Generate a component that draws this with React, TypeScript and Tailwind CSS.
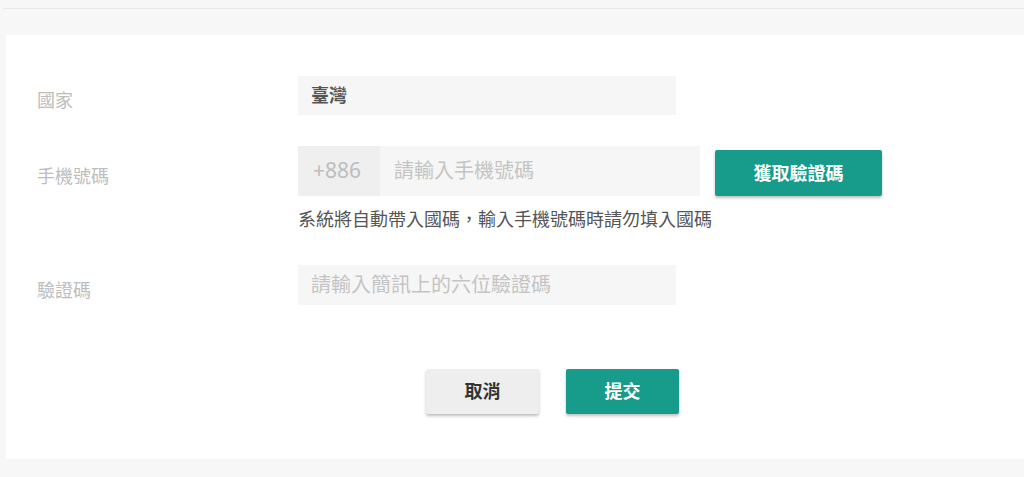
export default function App() {
  return (
    <div
      className="min-h-[477px] bg-[#f7f7f7] pt-2 text-[18px]"
      style={{ fontFamily: '"Noto Sans", "Noto Sans CJK TC", sans-serif' }}
    >
      <div className="ml-[3px] h-px bg-[#e8e8e8]" />
      <div className="ml-[6px] mt-[26px] h-[424px] bg-white pl-[31px] pt-[41px]">
        {/* 國家 */}
        <div className="flex">
          <label className="w-[261px] pt-[10px] leading-[29px] text-[#bdbdbd]">國家</label>
          <div className="flex h-[39px] w-[378px] items-center bg-[#f6f6f6] px-[13px] font-bold text-[#555]">
            臺灣
          </div>
        </div>

        {/* 手機號碼 */}
        <div className="mt-[31px] flex">
          <label className="w-[261px] pt-[16px] leading-[29px] text-[#bdbdbd]">手機號碼</label>
          <div>
            <div className="flex items-end">
              <div className="flex h-[50px] w-[402px] bg-[#f6f6f6]">
                <span className="flex w-[82px] items-center bg-[#efefef] pl-[15px] text-[21px] text-[#bdbdbd]">
                  +886
                </span>
                <span className="flex items-center pl-[14px] text-[20px] text-[#c4c4c4]">請輸入手機號碼</span>
              </div>
              <button className="ml-[15px] h-[46px] w-[167px] rounded-[2px] bg-[#179b8b] font-bold text-white shadow-[0_2px_3px_rgba(0,0,0,0.25)]">
                獲取驗證碼
              </button>
            </div>
            <p className="mt-[12px] leading-[22px] text-[#555]">系統將自動帶入國碼，輸入手機號碼時請勿填入國碼</p>
          </div>
        </div>

        {/* 驗證碼 */}
        <div className="mt-[35px] flex">
          <label className="w-[261px] pt-[11px] leading-[29px] text-[#bdbdbd]">驗證碼</label>
          <div className="flex h-[40px] w-[378px] items-center bg-[#f6f6f6] px-[13px] text-[20px] text-[#c4c4c4]">
            請輸入簡訊上的六位驗證碼
          </div>
        </div>

        {/* actions */}
        <div className="mt-[64px] flex pl-[389px]">
          <button className="h-[45px] w-[113px] rounded-[2px] bg-[#eeeeee] font-bold text-[#333] shadow-[0_2px_3px_rgba(0,0,0,0.25)]">
            取消
          </button>
          <button className="ml-[27px] h-[45px] w-[113px] rounded-[2px] bg-[#179b8b] font-bold text-white shadow-[0_2px_3px_rgba(0,0,0,0.25)]">
            提交
          </button>
        </div>
      </div>
    </div>
  );
}
